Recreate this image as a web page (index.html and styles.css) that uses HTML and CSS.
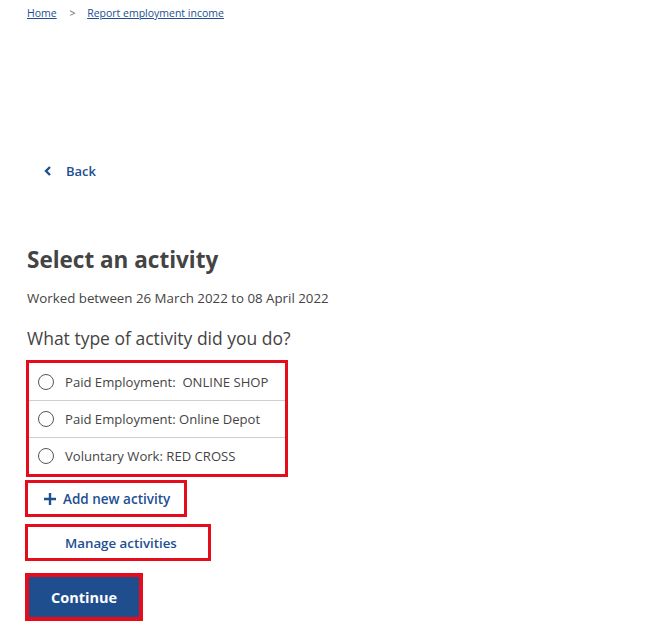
FILE: index.html
```html
<!DOCTYPE html>
<html lang="en">
<head>
  <meta charset="UTF-8" />
  <meta name="viewport" content="width=device-width, initial-scale=1.0"/>
  <title>Select an activity</title>
  <link rel="stylesheet" href="styles.css">
</head>
<body>
  <nav class="breadcrumb">
    <a href="#">Home</a>
    <span class="sep">&gt;</span>
    <a href="#">Report employment income</a>
  </nav>

  <a class="back-link" href="#">
    <svg width="8" height="10" viewBox="0 0 8 10" aria-hidden="true">
      <path d="M6 1 L2 5 L6 9" fill="none" stroke="#1d4f91" stroke-width="2.4"/>
    </svg>
    <span>Back</span>
  </a>

  <main class="content">
    <h1>Select an activity</h1>
    <p class="hint">Worked between 26 March 2022 to 08 April 2022</p>

    <!-- Activity choices -->
    <div class="activity-list" role="radiogroup">
      <p class="question">What type of activity did you do?</p>
      <div class="options">
        <label class="option"><input type="radio" name="activity"> <span>Paid Employment:&nbsp; ONLINE SHOP</span></label>
        <label class="option"><input type="radio" name="activity"> <span>Paid Employment: Online Depot</span></label>
        <label class="option"><input type="radio" name="activity"> <span>Voluntary Work: RED CROSS</span></label>
      </div>
    </div>

    <div class="actions">
      <a class="link-btn add-btn" href="#">
        <svg width="12" height="12" viewBox="0 0 12 12" aria-hidden="true">
          <path d="M6 0 V12 M0 6 H12" stroke="#1d4f91" stroke-width="2.4"/>
        </svg>
        Add new activity
      </a>
      <a class="link-btn manage-btn" href="#">Manage activities</a>
      <button class="continue-btn">Continue</button>
    </div>
  </main>
</body>
</html>
```

FILE: styles.css
```css
body {
  font-family: 'Open Sans', 'Segoe UI', sans-serif;
  margin: 0;
  padding: 0;
  background: white;
  color: #444;
}

a {
  color: #1d4f91;
}

.breadcrumb {
  padding: 5px 0 0 27px;
  font-size: 10.5px;
  line-height: 16px;
}

.breadcrumb .sep {
  color: #666;
  margin: 0 9px 0 10px;
}

.back-link {
  display: inline-flex;
  align-items: center;
  gap: 14px;
  margin: 140px 0 0 44px;
  font-size: 13px;
  font-weight: 600;
  text-decoration: none;
  line-height: 20px;
}

.content {
  padding: 64px 0 0 27px;
}

h1 {
  margin: 0;
  font-size: 22.5px;
  font-weight: 700;
  line-height: 30px;
  color: #444;
}

.hint {
  margin: 13px 0 0;
  font-size: 13.3px;
  line-height: 20px;
}

.question {
  margin: 18px 0 10px;
  font-size: 17.5px;
  line-height: 24px;
}

.options {
  width: 256px;
  margin-left: -1px;
  border: 3px solid #e50c1c;
}

.option {
  display: flex;
  align-items: center;
  gap: 11px;
  box-sizing: border-box;
  height: 37px;
  padding: 0 0 0 9px;
  font-size: 13.1px;
  border-top: 1px solid #cfcfcf;
}

.option:first-child {
  border-top: none;
}

.option input {
  appearance: none;
  margin: 0;
  width: 16px;
  height: 16px;
  border: 1.5px solid #555;
  border-radius: 50%;
  box-sizing: border-box;
}

.actions {
  display: flex;
  flex-direction: column;
  align-items: flex-start;
  margin-top: 3px;
  margin-left: -2px;
}

.link-btn {
  display: flex;
  align-items: center;
  gap: 7px;
  height: 31px;
  font-size: 13.5px;
  font-weight: 600;
  text-decoration: none;
  border: 3px solid #e50c1c;
}

.add-btn {
  width: 140px;
  padding-left: 16px;
}

.manage-btn {
  margin-top: 7px;
  width: 143px;
  padding-left: 37px;
  font-size: 13.3px;
}

.continue-btn {
  margin-top: 12px;
  width: 118px;
  height: 48px;
  background: #1f4e8f;
  color: white;
  font-family: inherit;
  font-size: 14.5px;
  font-weight: 700;
  border: 4px solid #e50c1c;
  cursor: pointer;
}
```
